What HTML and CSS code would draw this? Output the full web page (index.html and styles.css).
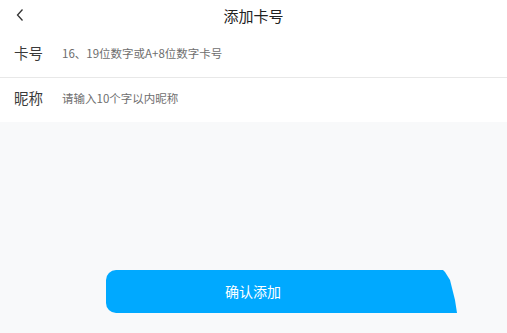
FILE: index.html
```html
<!DOCTYPE html>
<html lang="zh">
<head>
<meta charset="utf-8">
<link rel="stylesheet" href="styles.css">
</head>
<body>
<div class="page">
  <header class="topbar">
    <svg class="back" width="10" height="14" viewBox="0 0 10 14"><path d="M7.5 1.5 L2.5 7 L7.5 12.5" fill="none" stroke="#333" stroke-width="1.3"/></svg>
    <div class="title">添加卡号</div>
  </header>
  <section class="form">
    <div class="row">
      <span class="label">卡号</span>
      <span class="ph">16、19位数字或A+8位数字卡号</span>
    </div>
    <div class="divider"></div>
    <div class="row">
      <span class="label">昵称</span>
      <span class="ph">请输入10个字以内昵称</span>
    </div>
  </section>
  <main class="rest">
    <div class="btn"><span>确认添加</span></div>
  </main>
</div>
</body>
</html>
```
FILE: styles.css
```css
html, body { margin: 0; padding: 0; }
body {
  width: 507px; height: 333px; overflow: hidden;
  font-family: "Noto Sans CJK SC", "Noto Sans", sans-serif;
  background: #f8f9fa;
}
.page { display: flex; flex-direction: column; height: 333px; }
.topbar {
  background: #fff; height: 33px; position: relative;
  display: flex; align-items: center; justify-content: center;
}
.back { position: absolute; left: 15px; top: 8px; }
.title { font-size: 15px; color: #222; line-height: 1; margin-top: -3px; }
.form { background: #fff; }
.row { height: 44px; display: flex; align-items: center; padding-left: 14px; }
.label { font-size: 14.5px; color: #3a3a3a; width: 48px; line-height: 1; margin-top: -3px; }
.ph { font-size: 11.5px; color: #6e6e6e; line-height: 1; margin-top: -3px; }
.divider { height: 1px; background: #e8e8e8; }
.rest { flex: 1; padding-top: 148px; padding-left: 106px; }
.btn {
  width: 351px; height: 43px; background: #00a9ff;
  border-radius: 10px 0 0 10px;
  clip-path: polygon(0 0, 337px 0, 339px 2px, 344px 10px, 346px 18px, 349px 30px, 351px 43px, 0 43px);
  display: flex; align-items: center;
}
.btn span { padding-left: 119px; color: #fff; font-size: 14px; line-height: 1; margin-top: -2px; }
```
